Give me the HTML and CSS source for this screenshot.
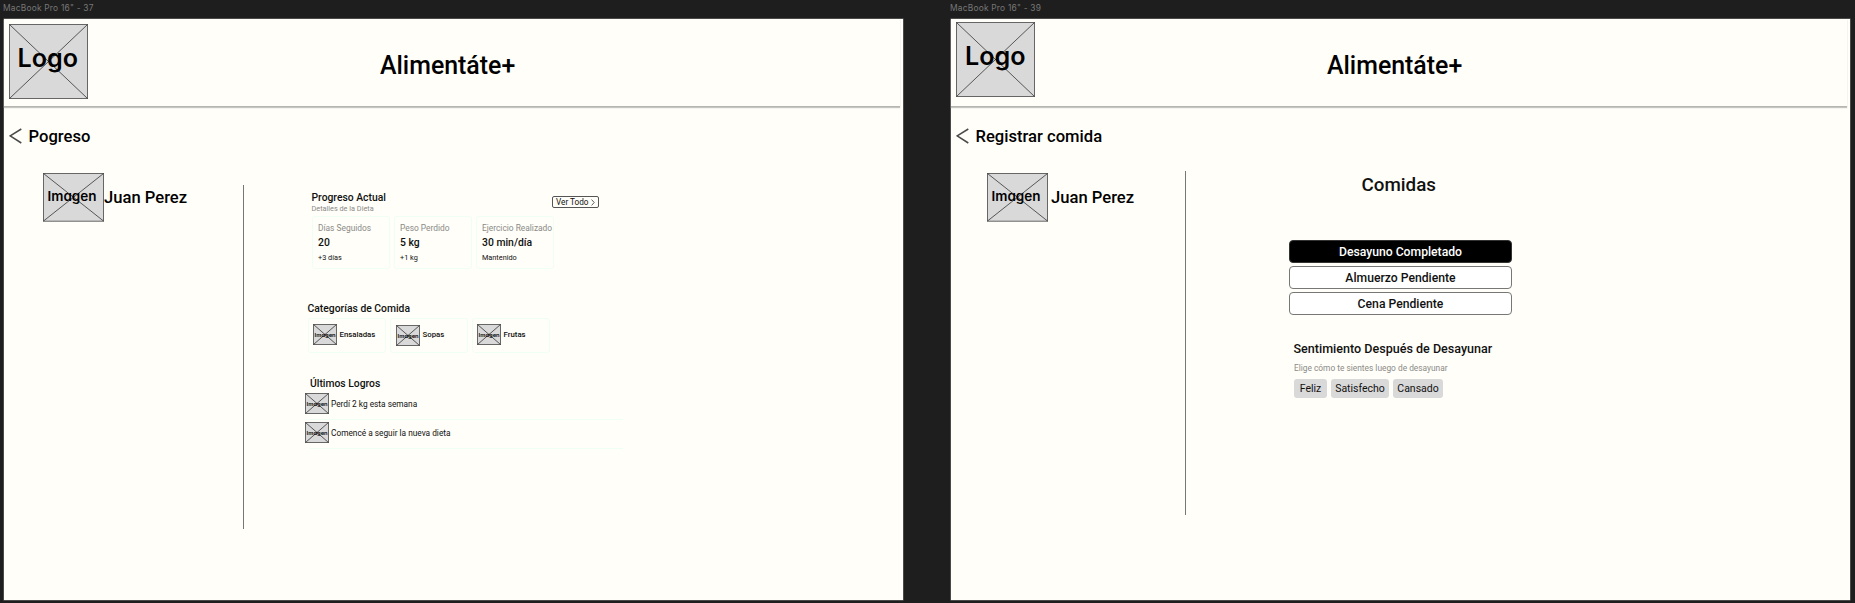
FILE: index.html
```html
<!DOCTYPE html>
<html lang="es">
<head>
<meta charset="utf-8">
<title>Alimentáte+</title>
<link rel="stylesheet" href="styles.css">
</head>
<body>
<div class="canvas">
  <section class="frame">
    <div class="frame-name">MacBook Pro 16" - 37</div>
    <div class="board">
      <header class="header">
        <svg class="logo" viewBox="0 0 79 75"><rect x=".5" y=".5" width="78" height="74" class="ph-box"/><path d="M.5 .5L78.5 74.5M78.5 .5L.5 74.5" class="ph-line"/><text x="8.5" y="42.5" class="ph-text" font-size="25" textLength="60.5" lengthAdjust="spacingAndGlyphs">Logo</text></svg>
        <h1 class="brand">Alimentáte+</h1>
      </header>
      <div class="back"><svg class="back-icon" viewBox="0 0 13 16"><path d="M12.3 1L1.2 7.9L12.3 15" class="back-line"/></svg><span>Pogreso</span></div>
      <div class="body">
        <aside class="profile">
          <svg class="avatar" viewBox="0 0 61 49"><rect x=".5" y=".5" width="60" height="47.7" class="ph-box"/><path d="M.5 .5L60.5 48M60.5 .5L.5 48" class="ph-line"/><text x="4.5" y="28" class="ph-text" font-size="13" textLength="49" lengthAdjust="spacingAndGlyphs">Imagen</text></svg>
          <span class="name">Juan Perez</span>
        </aside>
        <div class="rule"></div>
        <main class="progress">
          <div class="head">
            <div class="head-text"><h2 class="h">Progreso Actual</h2><p class="sub">Detalles de la Dieta</p></div>
            <button class="all"><span>Ver Todo</span><svg width="4" height="7" viewBox="0 0 4 7"><path d="M.6 .6L3.2 3.5L.6 6.4" fill="none" stroke="#333" stroke-width=".8"/></svg></button>
          </div>
          <div class="stats">
            <div class="stat"><span class="label">Días Seguidos</span><b class="value">20</b><span class="delta">+3 días</span></div>
            <div class="stat"><span class="label">Peso Perdido</span><b class="value">5 kg</b><span class="delta">+1 kg</span></div>
            <div class="stat"><span class="label">Ejercicio Realizado</span><b class="value">30 min/día</b><span class="delta">Mantenido</span></div>
          </div>
          <h2 class="h h-cat">Categorías de Comida</h2>
          <div class="cats">
            <div class="cat"><svg class="mini" viewBox="0 0 24 21"><rect x=".5" y=".5" width="23" height="20" class="ph-box"/><path d="M.5 .5L23.5 20.5M23.5 .5L.5 20.5" class="ph-line"/><text x="1.6" y="12.5" class="ph-text" font-size="5.4" textLength="21" lengthAdjust="spacingAndGlyphs">Imagen</text></svg><span>Ensaladas</span></div>
            <div class="cat cat-b"><svg class="mini" viewBox="0 0 24 21"><rect x=".5" y=".5" width="23" height="20" class="ph-box"/><path d="M.5 .5L23.5 20.5M23.5 .5L.5 20.5" class="ph-line"/><text x="1.6" y="12.5" class="ph-text" font-size="5.4" textLength="21" lengthAdjust="spacingAndGlyphs">Imagen</text></svg><span>Sopas</span></div>
            <div class="cat cat-c"><svg class="mini" viewBox="0 0 24 21"><rect x=".5" y=".5" width="23" height="20" class="ph-box"/><path d="M.5 .5L23.5 20.5M23.5 .5L.5 20.5" class="ph-line"/><text x="1.6" y="12.5" class="ph-text" font-size="5.4" textLength="21" lengthAdjust="spacingAndGlyphs">Imagen</text></svg><span>Frutas</span></div>
          </div>
          <h2 class="h h-log">Últimos Logros</h2>
          <div class="log"><svg class="mini" viewBox="0 0 24 21"><rect x=".5" y=".5" width="23" height="20" class="ph-box"/><path d="M.5 .5L23.5 20.5M23.5 .5L.5 20.5" class="ph-line"/><text x="1.6" y="12.5" class="ph-text" font-size="5.4" textLength="21" lengthAdjust="spacingAndGlyphs">Imagen</text></svg><span>Perdí 2 kg esta semana</span></div>
          <div class="log"><svg class="mini" viewBox="0 0 24 21"><rect x=".5" y=".5" width="23" height="20" class="ph-box"/><path d="M.5 .5L23.5 20.5M23.5 .5L.5 20.5" class="ph-line"/><text x="1.6" y="12.5" class="ph-text" font-size="5.4" textLength="21" lengthAdjust="spacingAndGlyphs">Imagen</text></svg><span>Comencé a seguir la nueva dieta</span></div>
        </main>
      </div>
    </div>
  </section>
  <section class="frame">
    <div class="frame-name">MacBook Pro 16" - 39</div>
    <div class="board board-b">
      <header class="header">
        <svg class="logo" viewBox="0 0 79 75"><rect x=".5" y=".5" width="78" height="74" class="ph-box"/><path d="M.5 .5L78.5 74.5M78.5 .5L.5 74.5" class="ph-line"/><text x="9" y="42.5" class="ph-text" font-size="25" textLength="60.5" lengthAdjust="spacingAndGlyphs">Logo</text></svg>
        <h1 class="brand">Alimentáte+</h1>
      </header>
      <div class="back"><svg class="back-icon" viewBox="0 0 13 16"><path d="M12.3 1L1.2 7.9L12.3 15" class="back-line"/></svg><span>Registrar comida</span></div>
      <div class="body">
        <aside class="profile">
          <svg class="avatar" viewBox="0 0 61 49"><rect x=".5" y=".5" width="60" height="47.7" class="ph-box"/><path d="M.5 .5L60.5 48M60.5 .5L.5 48" class="ph-line"/><text x="4.5" y="28" class="ph-text" font-size="13" textLength="49" lengthAdjust="spacingAndGlyphs">Imagen</text></svg>
          <span class="name">Juan Perez</span>
        </aside>
        <div class="rule"></div>
        <main class="meals">
          <h2 class="meals-title">Comidas</h2>
          <div class="meal-list">
            <button class="meal done">Desayuno Completado</button>
            <button class="meal">Almuerzo Pendiente</button>
            <button class="meal">Cena Pendiente</button>
          </div>
          <h3 class="feel-title">Sentimiento Después de Desayunar</h3>
          <p class="feel-sub">Elige cómo te sientes luego de desayunar</p>
          <div class="chips"><span class="chip c1">Feliz</span><span class="chip c2">Satisfecho</span><span class="chip c3">Cansado</span></div>
        </main>
      </div>
    </div>
  </section>
</div>
</body>
</html>
```
FILE: styles.css
```css
* { box-sizing: border-box; margin: 0; padding: 0; }
body { background: #1e1e1e; font-family: Roboto, sans-serif; color: #111; overflow: hidden; }
h1, h2, h3 { font-weight: 500; }
button { font: inherit; color: inherit; }
svg { display: block; flex: none; }
span, h1, h2, h3, p { white-space: nowrap; }
.canvas { display: flex; gap: 48.5px; width: 1855px; height: 603px; padding-left: 4px; }
.frame { width: 898.5px; flex: none; }
.frame-name { height: 19px; margin-left: -1px; font: 8.4px/16px Inter, sans-serif; color: #777; letter-spacing: 0.22px; }
.board { height: 581px; background: #fffef8; box-shadow: 0 0 0 0.5px #777; }

.ph-box { fill: #d9d9d9; stroke: #666; stroke-width: 1; }
.ph-line { fill: none; stroke: #333; stroke-width: 0.8; }
.ph-text { font-family: Inter, sans-serif; font-weight: 600; font-feature-settings: "cv11"; fill: #000; }

.header { display: flex; width: 896px; height: 88px; padding: 5px 0 0 5px; border-bottom: 1px solid #b5b5b1; box-shadow: 0 1px 1px #c4c4c0; }
.logo { width: 79px; height: 75px; }
.board-b .logo { margin-top: -2px; }
.brand { margin: 25px 0 0 292px; font-size: 24.9px; line-height: 34px; color: #000; }
.back { display: flex; height: 40px; padding: 19px 0 0 5px; }
.back-icon { width: 13px; height: 16px; margin: 2px 6.5px 0 0; }
.back-line { fill: none; stroke: #4a4a4a; stroke-width: 1.5; }
.back span, .name { font-size: 16.6px; font-weight: 500; line-height: 21px; color: #000; }

.body { display: flex; }
.profile { display: flex; width: 239px; padding: 26px 0 0 39px; }
.avatar { width: 61px; height: 49px; }
.name { margin-top: 14px; }
.rule { width: 1px; height: 344px; margin-top: 38px; background: #777; }
.board-b .profile { width: 234px; padding-left: 36px; }
.board-b .name { margin-left: 3px; }
.board-b .rule { margin-top: 24px; }

.progress { padding: 44px 0 0 61px; }
.head { display: flex; margin-left: 6.5px; }
.head-text { width: 240.5px; height: 25px; }
.h { font-size: 10.35px; line-height: 13px; }
.head .h { margin-top: 1px; line-height: 12px; }
.sub { font-size: 7.3px; line-height: 9px; color: #8b8b88; }
.all { display: flex; align-items: center; gap: 3px; width: 47px; height: 12px; margin-top: 5px; padding-left: 3px; border: 1px solid #555; border-radius: 2px; background: none; font-size: 8.2px; line-height: 10px; }
.stats, .cats { display: flex; gap: 4px; }
.stats { margin: 0 0 0 6.5px; }
.stat { display: flex; flex-direction: column; width: 78px; height: 53px; padding: 6px 0 0 5.5px; border: 1px solid #effff3; border-radius: 3px; }
.label { font-size: 8.4px; line-height: 11px; color: #8b8b88; }
.value { margin-top: 2px; font-size: 10.4px; font-weight: 500; line-height: 14px; }
.delta { margin-top: 3px; font-size: 7.3px; line-height: 10px; }
.h-cat { margin: 33px 0 0 2.5px; }
.cats { margin: 3px 0 0 2.5px; }
.cat { display: flex; gap: 2.5px; width: 78px; height: 35px; padding: 5px 0 0 4.5px; border: 1px solid #effff3; border-radius: 3px; font-size: 7.8px; font-weight: 500; line-height: 22px; }
.cat-b { padding-left: 5px; }
.cat-b .mini { margin-top: 1px; }
.cat-b span, .cat-c span { margin-left: 0.5px; }
.cat-c { padding-left: 4px; }
.mini { width: 24px; height: 21px; }
.h-log { margin: 24px 0 3px 5px; }
.log { display: flex; gap: 2px; width: 318px; height: 29px; font-size: 8.3px; line-height: 22px; background: linear-gradient(#effff3, #effff3) 5px 26px / 313px 1px no-repeat; }

.meals { padding: 25px 0 0 103px; }
.meals-title { margin-left: 72.5px; font-size: 18.8px; line-height: 26px; }
.meal-list { display: flex; flex-direction: column; gap: 3px; margin-top: 42px; }
.meal { width: 223px; height: 23px; border: 1px solid #777; border-radius: 4px; background: #fff; font-size: 12.2px; font-weight: 500; line-height: 20px; }
.done { background: #000; color: #fff; border-color: #333; }
.feel-title { margin: 25px 0 0 4.5px; font-size: 12.55px; line-height: 18px; }
.feel-sub { margin: 5px 0 0 5px; font-size: 8.35px; line-height: 11px; color: #8b8b88; }
.chips { display: flex; gap: 4px; margin: 5px 0 0 5px; }
.chip { height: 19px; border-radius: 3px; background: #d9d9d9; text-align: center; font-size: 10.5px; line-height: 19px; }
.c1 { width: 33px; }
.c2 { width: 58px; }
.c3 { width: 50px; }
```
